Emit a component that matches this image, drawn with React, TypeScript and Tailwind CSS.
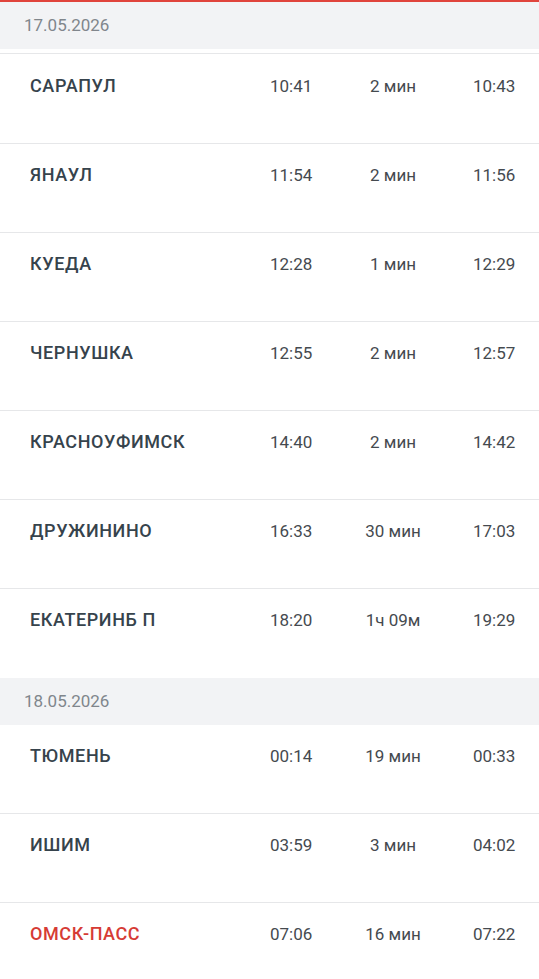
const day1 = [
  { name: "САРАПУЛ", arr: "10:41", stop: "2 мин", dep: "10:43" },
  { name: "ЯНАУЛ", arr: "11:54", stop: "2 мин", dep: "11:56" },
  { name: "КУЕДА", arr: "12:28", stop: "1 мин", dep: "12:29" },
  { name: "ЧЕРНУШКА", arr: "12:55", stop: "2 мин", dep: "12:57" },
  { name: "КРАСНОУФИМСК", arr: "14:40", stop: "2 мин", dep: "14:42" },
  { name: "ДРУЖИНИНО", arr: "16:33", stop: "30 мин", dep: "17:03" },
  { name: "ЕКАТЕРИНБ П", arr: "18:20", stop: "1ч 09м", dep: "19:29" },
];

const day2 = [
  { name: "ТЮМЕНЬ", arr: "00:14", stop: "19 мин", dep: "00:33" },
  { name: "ИШИМ", arr: "03:59", stop: "3 мин", dep: "04:02" },
  { name: "ОМСК-ПАСС", arr: "07:06", stop: "16 мин", dep: "07:22", current: true },
];

type Stop = { name: string; arr: string; stop: string; dep: string; current?: boolean };

function Row({ s }: { s: Stop }) {
  return (
    <div className="grid h-[89px] grid-cols-[270px_60px_126px_1fr] pt-[21px] text-[17px] leading-[20px]">
      <div
        className={`pl-[30px] text-[18px] font-medium tracking-[0.6px] ${
          s.current ? "text-[#d63b35]" : "text-[#36434c]"
        }`}
      >
        {s.name}
      </div>
      <div className="text-[#454a4f]">{s.arr}</div>
      <div className="text-center text-[#454a4f]">{s.stop}</div>
      <div className="pl-[17px] text-[#454a4f]">{s.dep}</div>
    </div>
  );
}

function DateHeader({ date }: { date: string }) {
  return (
    <div className="flex h-[47px] items-center bg-[#f2f3f5] pl-[24px] text-[17px] text-[#80868c]">
      {date}
    </div>
  );
}

export default function App() {
  return (
    <div className="h-[979px] overflow-hidden bg-white font-['Roboto',sans-serif]">
      <div className="h-[2px] bg-[#e0443c]" />
      <DateHeader date="17.05.2026" />
      <div className="h-[5px] border-b border-[#e6e7e9]" />
      <div className="divide-y divide-[#e6e7e9] pt-px">
        {day1.map((s) => (
          <Row key={s.name} s={s} />
        ))}
      </div>
      <DateHeader date="18.05.2026" />
      <div className="divide-y divide-[#e6e7e9]">
        {day2.map((s) => (
          <Row key={s.name} s={s} />
        ))}
      </div>
    </div>
  );
}
